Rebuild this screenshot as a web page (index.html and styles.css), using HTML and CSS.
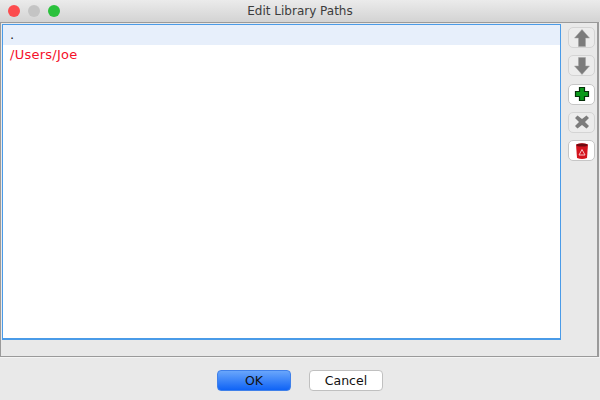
FILE: index.html
```html
<!DOCTYPE html>
<html lang="en">
	<head>
		<meta charset="UTF-8" />
		<title>Edit Library Paths</title>
		<link rel="stylesheet" href="styles.css">
	</head>
	<body>
		<div class="titlebar">
			<div class="lights">
				<span class="light red"></span>
				<span class="light gray"></span>
				<span class="light green"></span>
			</div>
			<span class="title">Edit Library Paths</span>
		</div>
		<div class="panel">
			<div class="list">
				<div class="row selected">.</div>
				<div class="row missing">/Users/Joe</div>
			</div>
			<div class="tools">
				<button class="tool off">
					<svg width="16" height="18" viewBox="0 0 16 18"><path d="M8 0.500 15.500 9H11.500V17.500H4.500V9H0.500Z" fill="#7c7c7c" stroke="#a0a0a0" stroke-width="0.5"/></svg>
				</button>
				<button class="tool off">
					<svg width="16" height="18" viewBox="0 0 16 18"><path d="M8 17.500 15.500 9H11.500V0.500H4.500V9H0.500Z" fill="#7c7c7c" stroke="#a0a0a0" stroke-width="0.5"/></svg>
				</button>
				<button class="tool">
					<svg width="16" height="16" viewBox="0 0 16 16"><path d="M5.500 1.500H10.500V5.500H14.500V10.500H10.500V14.500H5.500V10.500H1.500V5.500H5.500Z" fill="#0a9a1a" stroke="#06300a" stroke-width="1.200"/></svg>
				</button>
				<button class="tool off">
					<svg width="16" height="16" viewBox="0 0 16 16"><path d="M3.500 1.500 8 5 12.500 1.500 15 4 11 8 15 12 12.500 14.500 8 11 3.500 14.500 1 12 5 8 1 4Z" fill="#7c7c7c"/></svg>
				</button>
				<button class="tool">
					<svg width="14" height="18" viewBox="0 0 14 18"><path d="M1 2.500Q7 0 13 2.500L12 16Q7 18 2 16Z" fill="#d4141e"/><ellipse cx="7" cy="3" rx="5.500" ry="1.500" fill="#6e0a10"/><path d="M7 7.500 10 13H4Z" fill="none" stroke="#f6c2c5" stroke-width="1"/></svg>
				</button>
			</div>
		</div>
		<div class="footer">
			<button class="btn primary">OK</button>
			<button class="btn">Cancel</button>
		</div>
	</body>
</html>
```

FILE: styles.css
```css
body {
	margin: 0;
	width: 600px;
	height: 400px;
	overflow: hidden;
	display: flex;
	flex-direction: column;
	background-color: #e9e9e9;
	font-family: "DejaVu Sans", sans-serif;
	font-size: 12px;
	color: #222;
}

.titlebar {
	position: relative;
	height: 22px;
	display: flex;
	align-items: center;
	justify-content: center;
	background: linear-gradient(#ebebeb, #d3d3d3);
	color: #3c3c3c;
}

.lights {
	position: absolute;
	left: 8px;
	top: 5px;
	display: flex;
	gap: 8px;
}

.light {
	width: 12px;
	height: 12px;
	border-radius: 50%;
}

.red {
	background-color: #fc4c4e;
}

.gray {
	background-color: #c4c4c4;
}

.green {
	background-color: #2ac13c;
}

.panel {
	box-sizing: border-box;
	height: 335px;
	margin-right: 1px;
	display: flex;
	border: 1px solid #9a9a9a;
	border-width: 1px 2px 1px 1px;
	padding: 1px 2px 16px 1px;
	gap: 7px;
}

.list {
	flex: 1;
	background-color: #fff;
	border: 1px solid #4a9be8;
	border-bottom-width: 2px;
}

.row {
	height: 20px;
	line-height: 20px;
	padding-left: 7px;
	font-size: 13px;
	letter-spacing: 0.25px;
}

.selected {
	background-color: #e7effb;
}

.missing {
	color: #f5102a;
	height: 21px;
}

.tools {
	display: flex;
	flex-direction: column;
	gap: 7.25px;
	padding-top: 3px;
}

.tool {
	width: 27px;
	height: 21px;
	padding: 0;
	display: flex;
	align-items: center;
	justify-content: center;
	background-color: #fff;
	border: 1px solid #c6c6c6;
	border-radius: 5px;
}

.tool.off {
	background-color: #ececec;
	border-color: #d4d4d4;
}

.footer {
	flex: 1;
	display: flex;
	justify-content: center;
	align-items: center;
	gap: 18px;
	padding-top: 2px;
	border-top: 1px solid #f4f4f4;
}

.btn {
	width: 74px;
	height: 21px;
	padding: 0;
	font-family: "DejaVu Sans", sans-serif;
	font-size: 12.5px;
	color: #111;
	background-color: #fff;
	border: 1px solid #c0c0c0;
	border-radius: 4px;
}

.btn.primary {
	background: linear-gradient(#69a6fb, #0f63f6);
	border-color: #3f80ea;
}
```
